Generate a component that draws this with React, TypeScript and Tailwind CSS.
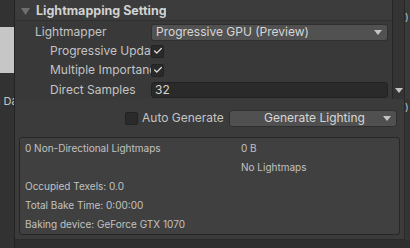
import { Check } from 'lucide-react';

const font = { fontFamily: 'Inter, "Noto Sans", sans-serif' };

function Caret({ className = '' }: { className?: string }) {
  return (
    <svg width="8" height="5" viewBox="0 0 8 5" className={className}>
      <path d="M0 0 H8 L4 5 Z" fill="#c4c4c4" />
    </svg>
  );
}

function Box({ checked }: { checked?: boolean }) {
  return (
    <div className="w-[13px] h-[13px] rounded-[2px] bg-[#2a2a2a] border border-[#222] flex items-center justify-center">
      {checked && <Check size={10} strokeWidth={3} color="#e4e4e4" />}
    </div>
  );
}

export default function App() {
  return (
    <div style={font} className="w-[410px] h-[248px] flex overflow-hidden bg-[#2f2f2f] text-[#c4c4c4]">
      {/* background window on the left */}
      <div className="w-[14px] shrink-0 flex flex-col bg-[#323232] overflow-hidden">
        <div className="h-[27px]" />
        <div className="h-[46px] bg-[#c6c6c6]" />
        <div className="h-[21px]" />
        <div className="text-[11px] leading-[14px] whitespace-nowrap -ml-[6px]">n Da</div>
      </div>

      <div className="flex-1 flex flex-col border-l border-[#232323]">
        {/* upper window */}
        <div className="h-[99px] flex overflow-hidden">
          <div className="w-[378px] shrink-0 bg-[#393939] border-r border-[#262626] flex flex-col">
            <div className="h-[21px] flex items-center bg-[#3c3c3c] border-b border-[#303030] pl-[6px] pt-[2px]">
              <svg width="9" height="7" viewBox="0 0 9 7" className="mr-[6px]">
                <path d="M0 0 H9 L4.5 7 Z" fill="#6f6f6f" />
              </svg>
              <div className="w-[130px] overflow-hidden whitespace-nowrap text-[12.5px] font-bold text-[#d2d2d2]">
                Lightmapping Settings
              </div>
            </div>
            <div className="h-[20px] mt-[2px] flex items-center">
              <div className="w-[136px] pl-[20px] text-[12px]">Lightmapper</div>
              <div className="w-[237px] h-[17px] rounded-[3px] bg-[#515151] border border-[#2f2f2f] flex items-center justify-between pl-[4px] pr-[5px] text-[12px] text-[#d6d6d6]">
                <span>Progressive GPU (Preview)</span>
                <Caret />
              </div>
            </div>
            <div className="h-[20px] flex items-center">
              <div className="w-[136px] pl-[35px] text-[12px] whitespace-nowrap overflow-hidden">Progressive Update</div>
              <Box checked />
            </div>
            <div className="h-[20px] flex items-center">
              <div className="w-[136px] pl-[35px] text-[12px] whitespace-nowrap overflow-hidden">Multiple Importance</div>
              <Box checked />
            </div>
            <div className="h-[20px] flex items-start pt-[2px]">
              <div className="w-[136px] pl-[35px] text-[12px] leading-[16px]">Direct Samples</div>
              <div className="w-[237px] h-[16px] rounded-[3px] bg-[#2a2a2a] border border-[#212121] pl-[3px] text-[12px] leading-[14px] text-[#d6d6d6]">
                32
              </div>
            </div>
          </div>
          <div className="flex-1 flex bg-[#343434]">
            <div className="w-[11px] flex flex-col items-center justify-end pb-[6px]">
              <Caret />
            </div>
            <div className="flex-1 border-l border-[#262626] bg-[#3a3a3a] text-[10px] pt-[10px] overflow-hidden">)</div>
          </div>
        </div>

        {/* lower window */}
        <div className="h-[141px] flex">
          <div className="w-[390px] shrink-0 bg-[#3b3b3b] border-r border-b border-[#2a2a2a] flex flex-col px-[4px]">
            <div className="h-[38px] flex items-center pl-[106px]">
              <Box />
              <span className="ml-[4px] text-[12px] w-[87px]">Auto Generate</span>
              <div className="w-[168px] h-[17px] rounded-[3px] bg-[#505050] border border-[#2f2f2f] flex items-center justify-between pl-[34px] pr-[5px] text-[12px] text-[#d6d6d6]">
                <span>Generate Lighting</span>
                <Caret />
              </div>
            </div>
            <div className="h-[98px] rounded-[3px] bg-[#404040] border border-[#262626] px-[5px] pt-[1px] text-[10px] leading-[19px] text-[#c2c2c2]">
              <div className="flex">
                <span className="w-[216px]">0 Non-Directional Lightmaps</span>
                <span>0 B</span>
              </div>
              <div className="flex">
                <span className="w-[216px]" />
                <span>No Lightmaps</span>
              </div>
              <div>Occupied Texels: 0.0</div>
              <div>Total Bake Time: 0:00:00</div>
              <div>Baking device: GeForce GTX 1070</div>
            </div>
          </div>
          <div className="flex-1 bg-[#343434] text-[10px] pt-[1px] overflow-hidden">)</div>
        </div>
        <div className="flex-1 bg-[#2e2e2e]" />
      </div>
    </div>
  );
}
